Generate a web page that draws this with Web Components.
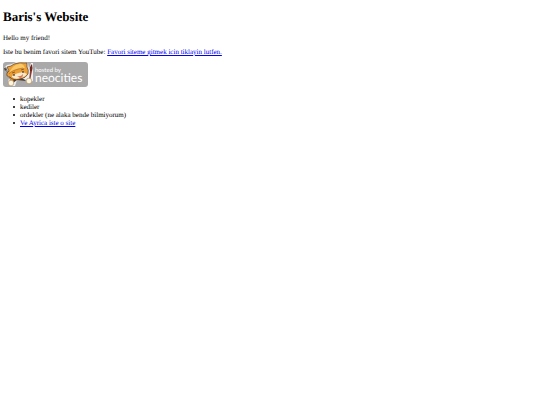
<!DOCTYPE html>
<html lang="tr">
<head>
<meta charset="utf-8">
<title>Baris's Website</title>
<style>
  body {
    margin: 0;
    background: #fff;
    color: #000;
    font: 7px/8px "Liberation Serif", "Times New Roman", serif;
    text-rendering: geometricPrecision;
  }
</style>
</head>
<body>
<home-page>
  <span slot="title">Baris's Website</span>
  <text-line>Hello my friend!</text-line>
  <text-line>Iste bu benim favori sitem YouTube: <site-link href="#youtube">Favori siteme gitmek icin tiklayin lutfen.</site-link></text-line>
  <neocities-badge></neocities-badge>
  <bullet-list>
    <bullet-item>kopekler</bullet-item>
    <bullet-item>kediler</bullet-item>
    <bullet-item>ordekler (ne alaka bende bilmiyorum)</bullet-item>
    <bullet-item><site-link href="#site">Ve Ayrica iste o site</site-link></bullet-item>
  </bullet-list>
</home-page>

<script>
class BaseElement extends HTMLElement {
  constructor() {
    super()
    this.attachShadow({ mode: 'open' })
    this.render()
  }

  render() {
    this.shadowRoot.innerHTML = `
      <style>${this.css}</style>
      ${this.html}
    `
  }
}

class HomePage extends BaseElement {
  get css() {
    return `
      :host {
        display: block;
        padding: 9px 3px;
      }
      h1 {
        margin: 0 0 9px;
        font-size: 13px;
        line-height: 16px;
        font-weight: bold;
      }
      main {
        display: flex;
        flex-direction: column;
        align-items: flex-start;
        gap: 6px;
      }
    `
  }
  get html() {
    return `
      <h1><slot name="title"></slot></h1>
      <main><slot></slot></main>
    `
  }
}

class TextLine extends BaseElement {
  get css() {
    return `
      :host { display: block; }
      p { margin: 0; }
    `
  }
  get html() {
    return '<p><slot></slot></p>'
  }
}

class SiteLink extends BaseElement {
  static get observedAttributes() {
    return ['href']
  }
  get css() {
    return `
      :host { display: inline; }
      a { color: #0000ee; text-decoration: underline; }
    `
  }
  get html() {
    return '<a><slot></slot></a>'
  }
  attributeChangedCallback(name, oldValue, newValue) {
    this.shadowRoot.querySelector('a').setAttribute('href', newValue)
  }
}

class BulletList extends BaseElement {
  get css() {
    return `
      :host { display: block; }
      div { padding: 1px 0 0 10px; }
    `
  }
  get html() {
    return '<div role="list"><slot></slot></div>'
  }
}

class BulletItem extends BaseElement {
  get css() {
    return `
      :host {
        display: flex;
        align-items: center;
        gap: 5px;
      }
      i {
        width: 2px;
        height: 2px;
        border-radius: 1px;
        background: currentColor;
      }
    `
  }
  get html() {
    return '<i></i><span><slot></slot></span>'
  }
  connectedCallback() {
    this.setAttribute('role', 'listitem')
  }
}

class NeocitiesBadge extends BaseElement {
  get css() {
    return `
      :host { display: block; }
      a { display: block; }
      svg { display: block; }
      text { fill: #fff; font-family: Lato, sans-serif; }
    `
  }
  get html() {
    return `
      <a href="#neocities" aria-label="hosted by neocities">
        <svg width="85" height="26" viewBox="0 0 85 26">
          <rect x="0" y="0" width="85" height="25" rx="3" fill="#a9a9a9"/>
          <!-- white outline behind the cat -->
          <path d="M4 3 9 2 13 0 21 0 25 1 26 7 28 1 30 1 30 14 30 19 25 21 22 17 14 18 12 24 7 24 5 20 6 16 1 6Z" fill="#eee"/>
          <!-- pencil -->
          <path d="M1 6 3 5 10 19 8 20Z" fill="#8b8985"/>
          <path d="M1 6 2 9 4 7Z" fill="#4a4037"/>
          <!-- body and arms -->
          <path d="M9 16 18 15 23 19 14 18 10 21 7 19Z" fill="#4b3c30"/>
          <path d="M8 15 11 16 10 20 7 19Z" fill="#df9130"/>
          <!-- head and ears -->
          <path d="M4 5 8 4 11 2Q16 0 24 1L24 5Q26 8 25 12Q23 16 17 17Q10 19 7 15Q3 15 4 11L6 9Z" fill="#eb9f35" stroke="#5a3e29" stroke-width=".7"/>
          <path d="M7 9Q10 3 16 2Q20 1 22 6Q13 6 7 10Z" fill="#f9c765"/>
          <path d="M6 12Q9 8 20 6" fill="none" stroke="#b87528" stroke-width=".7"/>
          <path d="M9 14Q13 11 20 10L24 12Q22 15 17 16Q12 18 9 15Z" fill="#f8e7c9"/>
          <path d="M9 11 12 10M18 8 21 7" stroke="#6a3d20" stroke-width=".7"/>
          <ellipse cx="11" cy="13" rx=".8" ry="1.1" fill="#43382e"/>
          <ellipse cx="20" cy="10" rx=".8" ry="1.1" fill="#43382e"/>
          <path d="M14 14Q18 15 20 12Q20 16 17 16Z" fill="#d77755"/>
          <!-- brush -->
          <path d="M27 9 29 9 27 19 26 19Z" fill="#8a3c30"/>
          <path d="M27 9Q26 5 29 2Q30 6 29 9Z" fill="#70281f"/>
          <!-- paws -->
          <circle cx="8" cy="21" r="2.8" fill="#fff6df" stroke="#ad8556" stroke-width=".6"/>
          <circle cx="26" cy="19" r="2.8" fill="#fff6df" stroke="#ad8556" stroke-width=".6"/>
          <text x="32" y="10" font-size="6">hosted by</text>
          <text x="32" y="20" font-size="12">neocities</text>
        </svg>
      </a>
    `
  }
}

customElements.define('home-page', HomePage)
customElements.define('text-line', TextLine)
customElements.define('site-link', SiteLink)
customElements.define('bullet-list', BulletList)
customElements.define('bullet-item', BulletItem)
customElements.define('neocities-badge', NeocitiesBadge)
</script>
</body>
</html>
